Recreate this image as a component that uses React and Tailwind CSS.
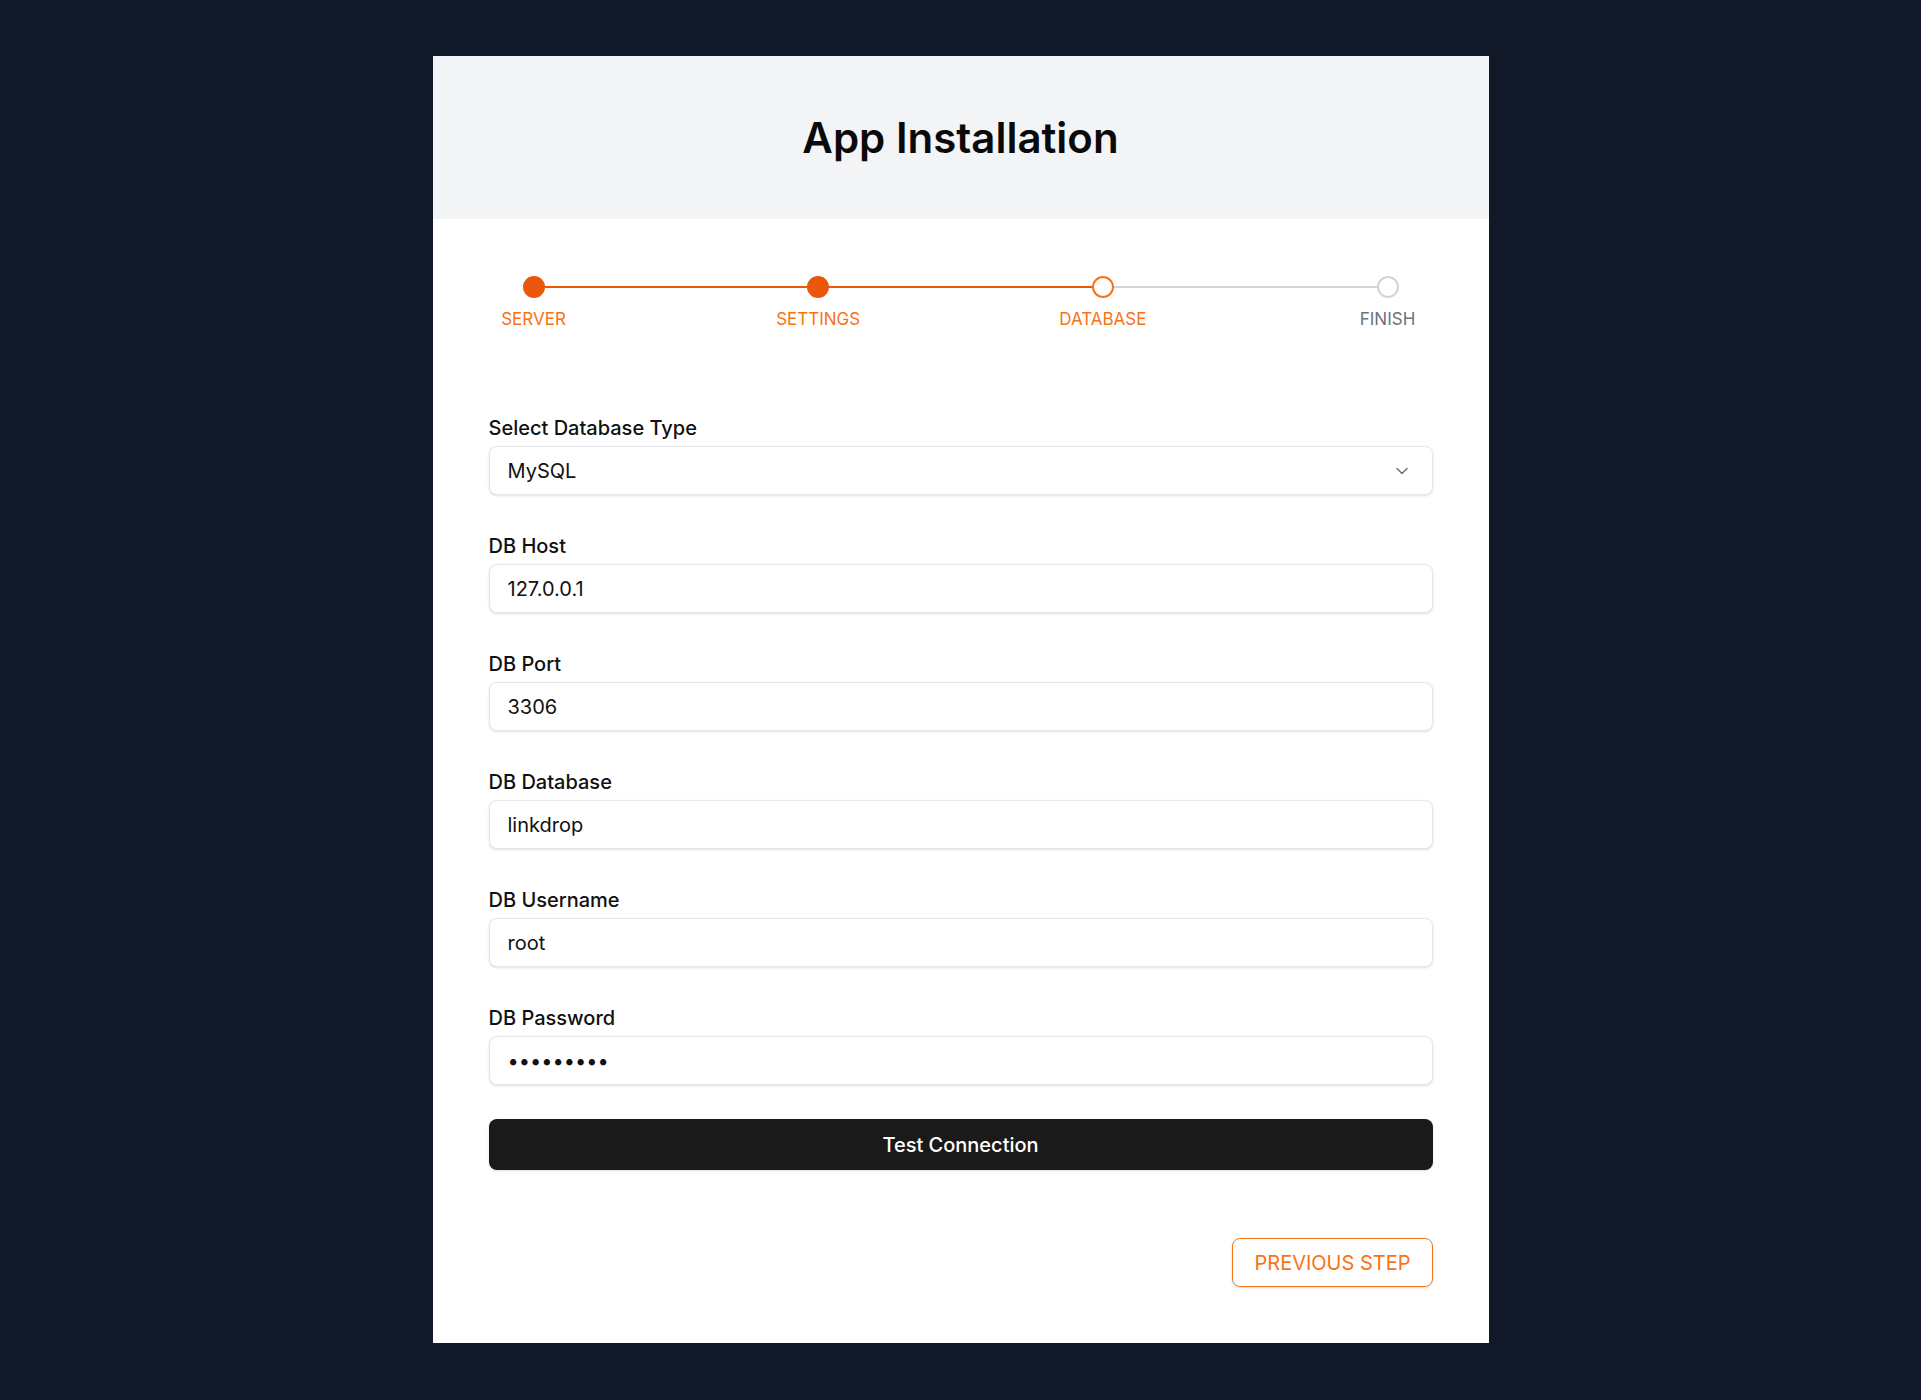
import { ChevronDown } from "lucide-react";

const steps = [
  { name: "SERVER", state: "done" },
  { name: "SETTINGS", state: "done" },
  { name: "DATABASE", state: "current" },
  { name: "FINISH", state: "todo" },
];

function Step({ step }) {
  const circle =
    step.state === "done"
      ? "bg-[#ea580c] border-[#ea580c]"
      : step.state === "current"
      ? "bg-white border-[#f97316]"
      : "bg-white border-[#d1d5db]";
  const label = step.state === "todo" ? "text-[#6b7280]" : "text-[#f97316]";
  return (
    <div className="flex w-[22px] flex-col items-center">
      <div className={`h-[22px] w-[22px] rounded-full border-2 ${circle}`} />
      <div className={`mt-[9px] whitespace-nowrap text-[17px] leading-6 ${label}`}>{step.name}</div>
    </div>
  );
}

function Stepper() {
  return (
    <div className="flex items-start px-[34px]">
      {steps.map((s, i) => (
        <div key={s.name} className={`flex items-start ${i < steps.length - 1 ? "flex-1" : ""}`}>
          <Step step={s} />
          {i < steps.length - 1 && (
            <div
              className={`mt-[10px] h-[2px] flex-1 ${
                steps[i + 1].state === "todo" ? "bg-[#d1d5db]" : "bg-[#ea580c]"
              }`}
            />
          )}
        </div>
      ))}
    </div>
  );
}

const inputCls =
  "h-[49px] w-full rounded-lg border border-[#e5e7eb] bg-white px-[18px] text-[20px] text-[#111] shadow-sm outline-none";

function Field({ label, children }) {
  return (
    <div>
      <label className="mb-1 block text-[20px] font-medium leading-7 text-[#111]">{label}</label>
      {children}
    </div>
  );
}

export default function App() {
  return (
    <div className="min-h-screen bg-[#111827] py-14 font-['Inter',sans-serif]">
      <div className="mx-auto w-[1056px] bg-white">
        {/* Header */}
        <div className="flex h-[163px] items-center justify-center bg-[#f3f4f6]">
          <h1 className="text-[42px] font-semibold text-[#0a0a0a]">App Installation</h1>
        </div>

        <div className="px-14 pb-14 pt-[57px]">
          <Stepper />

          <div className="mt-[83px] flex flex-col gap-[37px]">
            <Field label="Select Database Type">
              <div className="relative">
                <select defaultValue="mysql" className={`${inputCls} appearance-none`}>
                  <option value="mysql">MySQL</option>
                  <option value="pgsql">PostgreSQL</option>
                  <option value="sqlite">SQLite</option>
                </select>
                <ChevronDown
                  size={20}
                  strokeWidth={1.75}
                  className="pointer-events-none absolute right-[21px] top-1/2 -translate-y-1/2 text-[#6b7280]"
                />
              </div>
            </Field>
            <Field label="DB Host">
              <input className={inputCls} defaultValue="127.0.0.1" />
            </Field>
            <Field label="DB Port">
              <input className={inputCls} defaultValue="3306" />
            </Field>
            <Field label="DB Database">
              <input className={inputCls} defaultValue="linkdrop" />
            </Field>
            <Field label="DB Username">
              <input className={inputCls} defaultValue="root" />
            </Field>
            <Field label="DB Password">
              <input type="password" className={inputCls} defaultValue="secret123" />
            </Field>
          </div>

          <button className="mt-[34px] h-[51px] w-full rounded-lg bg-[#1a1a1a] text-[20px] font-medium text-white shadow-sm">
            Test Connection
          </button>

          <div className="mt-[68px] flex justify-end">
            <button className="h-[49px] rounded-lg border border-[#f97316] px-[21px] text-[20px] uppercase text-[#f97316] shadow-sm">
              Previous Step
            </button>
          </div>
        </div>
      </div>
    </div>
  );
}
